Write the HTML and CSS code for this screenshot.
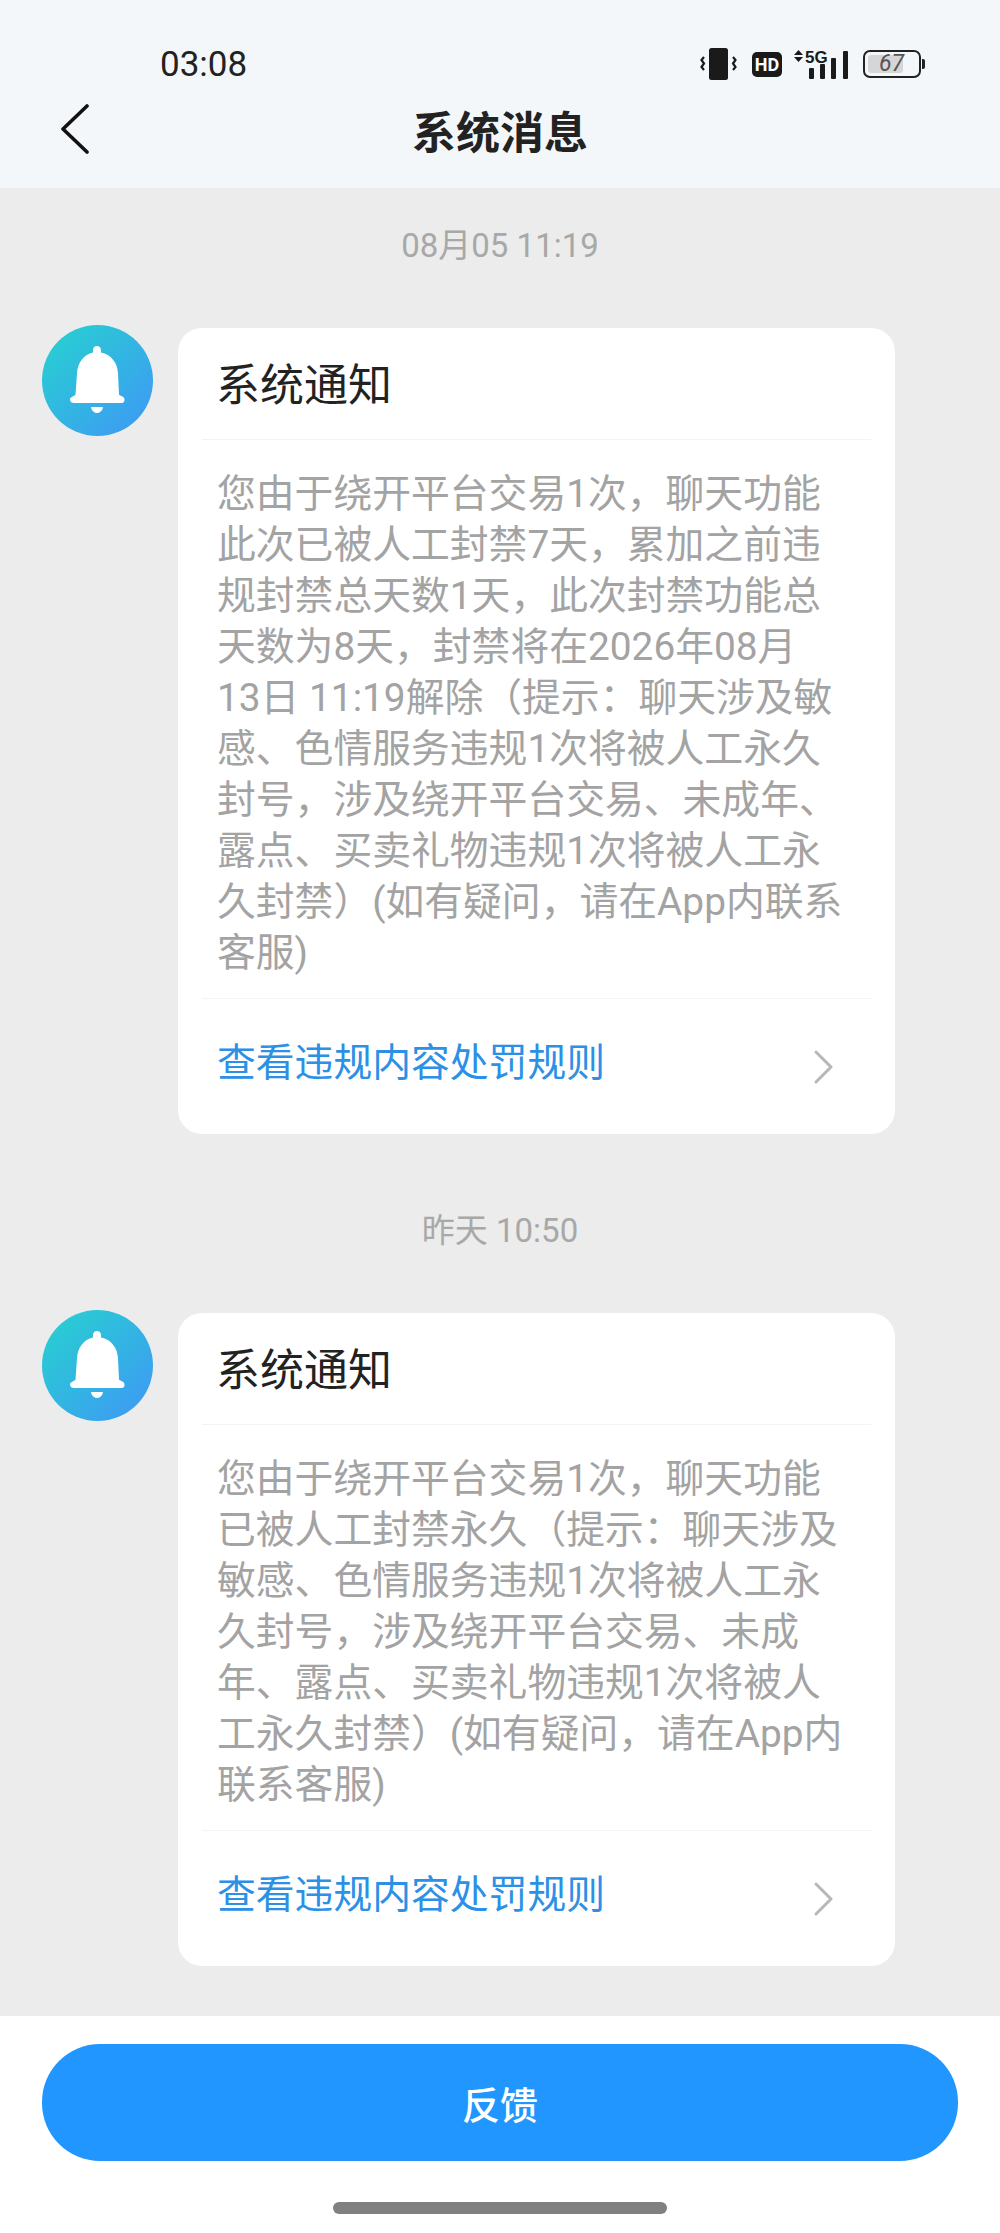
FILE: index.html
```html
<!DOCTYPE html>
<html lang="zh-CN">
<head>
    <meta charset="UTF-8">
    <meta name="viewport" content="width=device-width, initial-scale=1.0">
    <title>系统消息</title>
    <link rel="stylesheet" href="styles.css">
</head>
<body>
    <div class="page">
        <header class="header">
            <div class="status-bar">
                <span class="time">03:08</span>
                <div class="status-icons">
                    <svg class="icon-vibrate" width="40" height="32" viewBox="0 0 40 32">
                        <rect x="9" y="0" width="19" height="32" rx="2.500" fill="#1a1a1a"/>
                        <path d="M4 9l-2.500 3 2.500 3.500-2.500 3.500 2.500 3" fill="none" stroke="#1a1a1a" stroke-width="2.200"/>
                        <path d="M33 9l2.500 3-2.500 3.500 2.500 3.500-2.500 3" fill="none" stroke="#1a1a1a" stroke-width="2.200"/>
                    </svg>
                    <span class="hd-badge">HD</span>
                    <svg class="icon-signal" width="56" height="30" viewBox="0 0 56 30">
                        <path d="M5.500 1l4.500 5h-9zM5.500 13l-4.500-5h9z" fill="#1a1a1a"/>
                        <text class="signal-text" x="12" y="14">5G</text>
                        <rect x="16" y="19" width="5" height="11" rx="1" fill="#1a1a1a"/>
                        <rect x="27" y="15" width="5" height="15" rx="1" fill="#1a1a1a"/>
                        <rect x="38" y="9" width="5" height="21" rx="1" fill="#1a1a1a"/>
                        <rect x="50" y="2" width="5" height="28" rx="1" fill="#1a1a1a"/>
                    </svg>
                    <div class="battery">
                        <div class="battery-body">
                            <div class="battery-fill"></div>
                            <span class="battery-num">67</span>
                        </div>
                        <div class="battery-nub"></div>
                    </div>
                </div>
            </div>
            <div class="nav-bar">
                <svg class="back-icon" width="30" height="50" viewBox="0 0 30 50">
                    <path d="M27 2L3 25l24 23" fill="none" stroke="#111" stroke-width="3.600" stroke-linecap="round" stroke-linejoin="round"/>
                </svg>
                <div class="nav-title">系统消息</div>
            </div>
        </header>

        <main class="content">
            <div class="date">08月05 11:19</div>
            <div class="message">
                <div class="avatar">
                    <svg width="111" height="111" viewBox="0 0 111 111">
                        <path d="M55 21c2.500 0 4 1.700 4 4v2.500c10 2 16.500 10 17 21l1 21c.3 1.300 5.500 1.500 5.500 5s-2 3.500-4 3.500H32c-2 0-4-1-4-3.500s5.200-3.700 5.500-5l1.500-21c.5-11 7-19 16-21V25c0-2.300 1.500-4 4-4z" fill="#fff"/>
                        <path d="M49 82h12c-.5 3.500-3 6-6 6s-5.500-2.500-6-6z" fill="#fff"/>
                    </svg>
                </div>
                <div class="card">
                    <div class="card-title">系统通知</div>
                    <div class="card-body">
                        您由于绕开平台交易1次，聊天功能<br>
                        此次已被人工封禁7天，累加之前违<br>
                        规封禁总天数1天，此次封禁功能总<br>
                        天数为8天，封禁将在2026年08月<br>
                        13日 11:19解除（提示：聊天涉及敏<br>
                        感、色情服务违规1次将被人工永久<br>
                        封号，涉及绕开平台交易、未成年、<br>
                        露点、买卖礼物违规1次将被人工永<br>
                        久封禁）(如有疑问，请在App内联系<br>
                        客服)
                    </div>
                    <div class="card-link">
                        <span class="link-text">查看违规内容处罚规则</span>
                        <svg width="20" height="34" viewBox="0 0 20 34">
                            <path d="M2 2l15 15L2 32" fill="none" stroke="#b8b8b8" stroke-width="3" stroke-linecap="round" stroke-linejoin="round"/>
                        </svg>
                    </div>
                </div>
            </div>

            <div class="date">昨天 10:50</div>
            <div class="message">
                <div class="avatar">
                    <svg width="111" height="111" viewBox="0 0 111 111">
                        <path d="M55 21c2.500 0 4 1.700 4 4v2.500c10 2 16.500 10 17 21l1 21c.3 1.300 5.500 1.500 5.500 5s-2 3.500-4 3.500H32c-2 0-4-1-4-3.500s5.200-3.700 5.500-5l1.500-21c.5-11 7-19 16-21V25c0-2.300 1.500-4 4-4z" fill="#fff"/>
                        <path d="M49 82h12c-.5 3.500-3 6-6 6s-5.500-2.500-6-6z" fill="#fff"/>
                    </svg>
                </div>
                <div class="card">
                    <div class="card-title">系统通知</div>
                    <div class="card-body">
                        您由于绕开平台交易1次，聊天功能<br>
                        已被人工封禁永久（提示：聊天涉及<br>
                        敏感、色情服务违规1次将被人工永<br>
                        久封号，涉及绕开平台交易、未成<br>
                        年、露点、买卖礼物违规1次将被人<br>
                        工永久封禁）(如有疑问，请在App内<br>
                        联系客服)
                    </div>
                    <div class="card-link">
                        <span class="link-text">查看违规内容处罚规则</span>
                        <svg width="20" height="34" viewBox="0 0 20 34">
                            <path d="M2 2l15 15L2 32" fill="none" stroke="#b8b8b8" stroke-width="3" stroke-linecap="round" stroke-linejoin="round"/>
                        </svg>
                    </div>
                </div>
            </div>
        </main>

        <footer class="footer">
            <button class="feedback-btn">反馈</button>
            <div class="home-bar"></div>
        </footer>
    </div>
</body>
</html>
```

FILE: styles.css
```css
* {
    box-sizing: border-box;
}

body {
    margin: 0;
    background-color: #ececec;
    font-family: Roboto, "Noto Sans CJK SC", sans-serif;
}

.page {
    display: flex;
    flex-direction: column;
    height: 2233px;
    overflow: hidden;
}

.header {
    height: 188px;
    background-color: #f4f7fa;
}

.status-bar {
    display: flex;
    justify-content: space-between;
    align-items: center;
    height: 32px;
    margin-top: 48px;
    padding: 0 75px 0 160px;
}

.time {
    font-size: 35px;
    color: #222;
}

.status-icons {
    display: flex;
    align-items: center;
}

.icon-vibrate {
    margin-right: 12px;
}

.hd-badge {
    display: flex;
    justify-content: center;
    align-items: center;
    width: 30px;
    height: 25px;
    margin-right: 11px;
    background-color: #1a1a1a;
    border-radius: 5px;
    color: #fff;
    font-size: 18px;
    font-weight: bold;
}

.icon-signal {
    margin-right: 14px;
}

.signal-text {
    font-family: "Liberation Sans", sans-serif;
    font-size: 17px;
    font-weight: bold;
    fill: #1a1a1a;
}

.battery {
    display: flex;
    align-items: center;
    gap: 1px;
}

.battery-body {
    position: relative;
    width: 58px;
    height: 28px;
    padding: 3px;
    border: 2px solid #222;
    border-radius: 7px;
}

.battery-fill {
    width: 73%;
    height: 100%;
    background-color: #d6d6d6;
    border-radius: 3px;
}

.battery-num {
    position: absolute;
    top: 0;
    left: 14px;
    font-size: 23px;
    line-height: 24px;
    font-style: italic;
    color: #555;
}

.battery-nub {
    width: 3px;
    height: 10px;
    background-color: #222;
    border-radius: 0 2px 2px 0;
}

.nav-bar {
    position: relative;
    display: flex;
    justify-content: center;
    align-items: center;
    height: 60px;
    margin-top: 20px;
}

.back-icon {
    position: absolute;
    left: 60px;
    top: 4px;
}

.nav-title {
    font-size: 44px;
    font-weight: bold;
    color: #222;
}

.content {
    flex: 1;
    padding-top: 33px;
    min-height: 0;
}

.date {
    height: 50px;
    margin-bottom: 54px;
    line-height: 50px;
    text-align: center;
    font-size: 33px;
    color: #a8a8a8;
}

.message {
    display: flex;
    align-items: flex-start;
    gap: 25px;
    padding: 0 105px 0 42px;
    margin-bottom: 72px;
}

.avatar {
    flex-shrink: 0;
    width: 111px;
    height: 111px;
    border-radius: 50%;
    background: linear-gradient(135deg, #26d3cf, #3f97f6);
}

.avatar svg {
    display: block;
}

.card {
    flex: 1;
    min-width: 0;
    margin-top: 3px;
    padding: 0 24px;
    background-color: #fff;
    border-radius: 24px;
}

.card-title {
    height: 112px;
    padding: 0 14px;
    line-height: 116px;
    font-size: 44px;
    color: #222;
    border-bottom: 1px solid #f3f3f3;
}

.card-body {
    padding: 28px 0 20px 15px;
    font-size: 38.8px;
    line-height: 51px;
    color: #a3a3a3;
    white-space: nowrap;
    border-bottom: 1px solid #f3f3f3;
}

.card-link {
    display: flex;
    justify-content: space-between;
    align-items: center;
    height: 135px;
    padding: 0 37px 0 15px;
    color: #2b90e6;
    font-size: 38.8px;
}

.link-text {
    margin-bottom: 16px;
}

.footer {
    height: 217px;
    padding: 28px 42px 0;
    background-color: #fff;
}

.feedback-btn {
    display: block;
    width: 100%;
    height: 117px;
    border: none;
    border-radius: 58px;
    background-color: #2196ff;
    color: #fff;
    font-family: inherit;
    font-size: 38px;
    font-weight: 500;
}

.home-bar {
    width: 334px;
    height: 12px;
    margin: 41px auto 0;
    background-color: #808080;
    border-radius: 6px;
}
```
